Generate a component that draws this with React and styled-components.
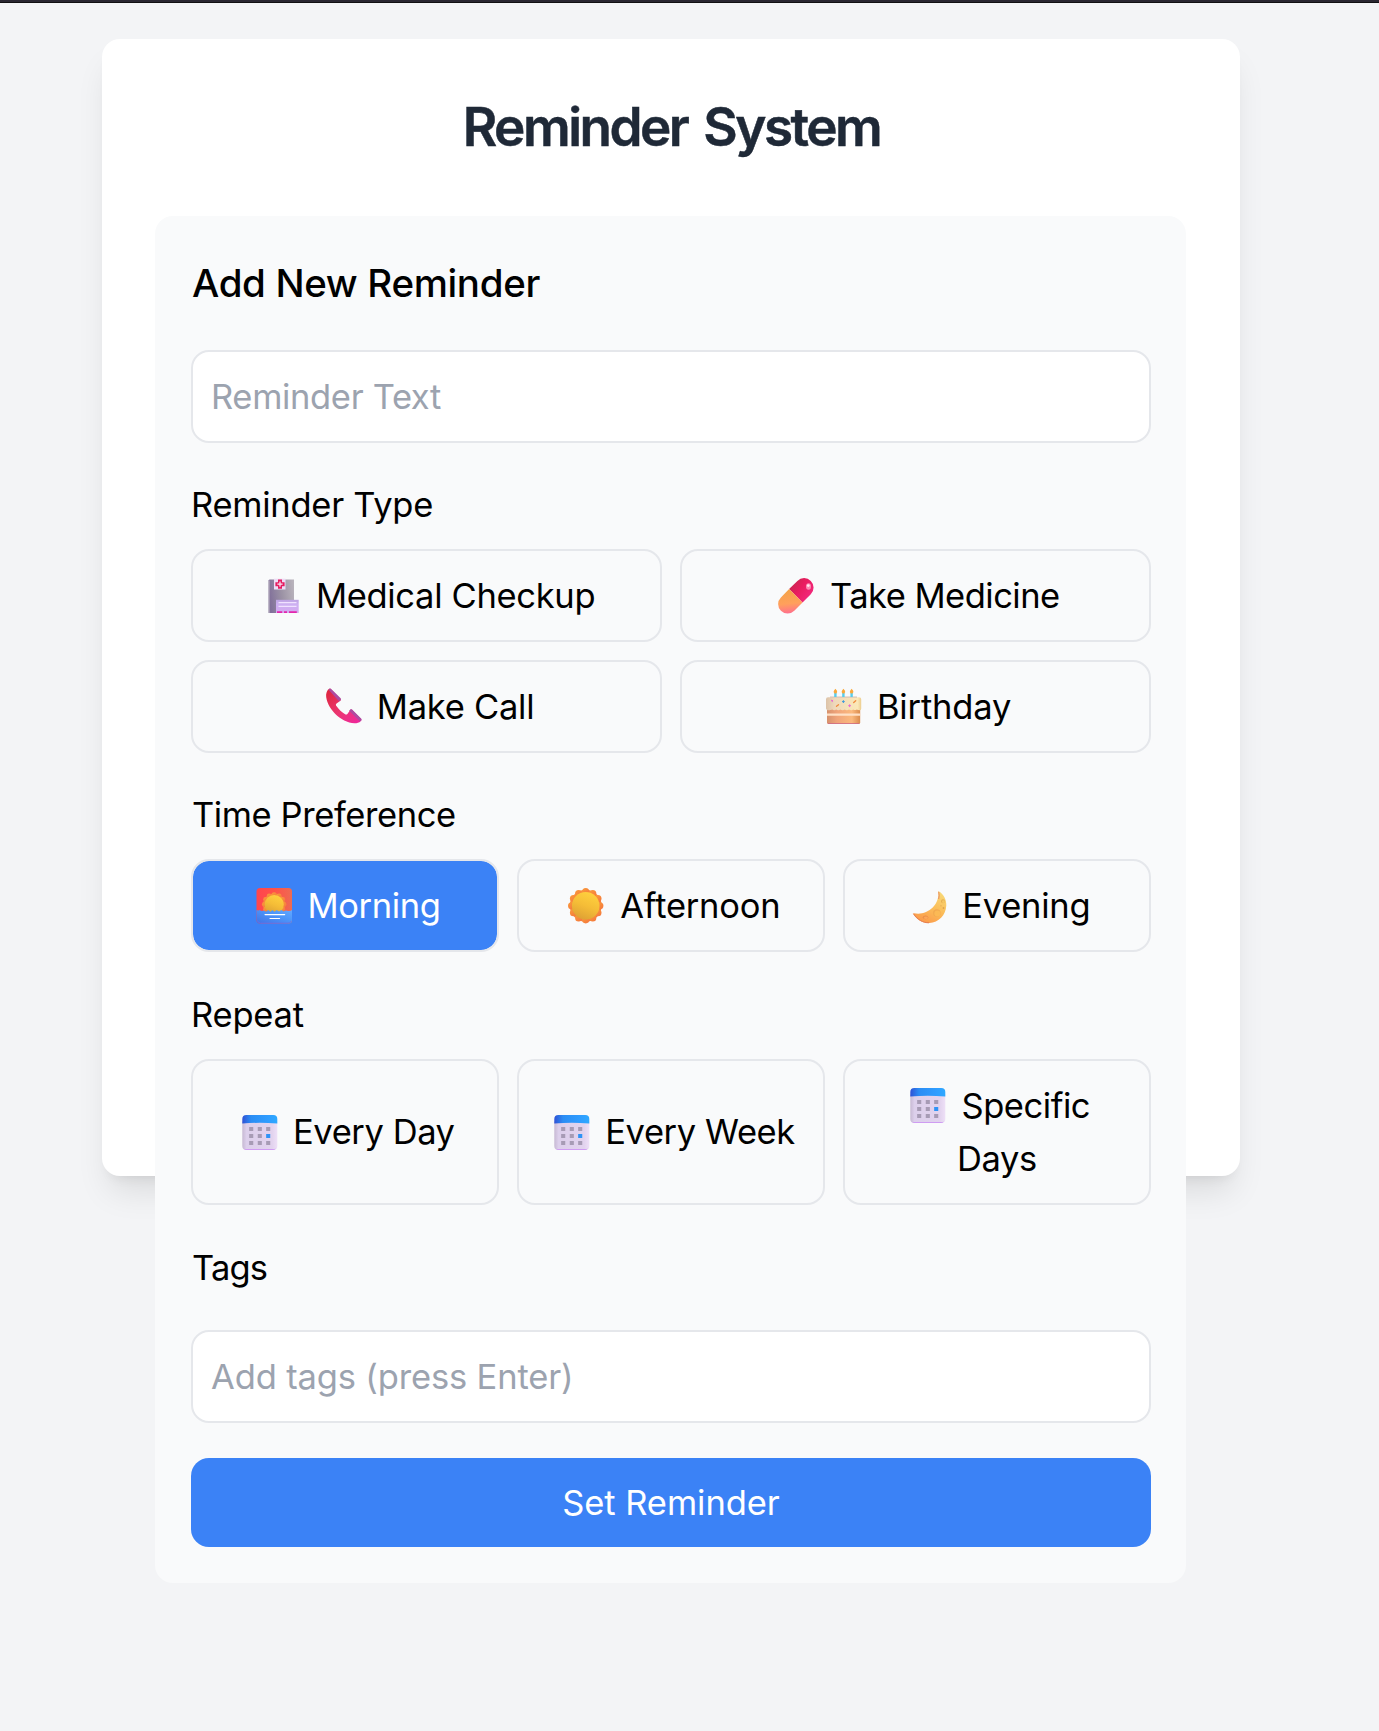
import React, { useState } from 'react';
import styled, { createGlobalStyle } from 'styled-components';

const GlobalStyle = createGlobalStyle`
  *, *::before, *::after { box-sizing: border-box; }
  body {
    margin: 0;
    background: #f3f4f6;
    color: #000;
    font-family: Inter, "Open Sans", sans-serif;
    font-size: 34.5px;
    line-height: 53.3px;
  }
`;

const Page = styled.main`
  height: 1731px;
  overflow: hidden;
  background: #f3f4f6;
  border-top: 2px solid #2a2731;
`;

const TopRule = styled.div`
  height: 1px;
  background: #111013;
`;

const Card = styled.section`
  width: 1138px;
  height: 1137px;
  margin: 36px 0 0 102px;
  padding: 53px 54px 0 53px;
  background: #fff;
  border-radius: 18px;
  box-shadow: 0 22px 33px -7px rgba(0, 0, 0, 0.1), 0 9px 13px -9px rgba(0, 0, 0, 0.1);
`;

const Title = styled.h1`
  margin: 0 0 53px;
  padding-left: 2px;
  color: #1f2937;
  font-size: 53px;
  font-weight: 600;
  line-height: 71px;
  letter-spacing: -2.5px;
  word-spacing: 5px;
  text-align: center;
  -webkit-text-stroke: 0.5px #1f2937;
`;

const Panel = styled.form`
  height: 1367px;
  padding: 36px 35px 0 36px;
  background: #f9fafb;
  border-radius: 18px;
`;

const Heading = styled.h2`
  margin: 0 0 36px;
  padding-left: 1px;
  font-size: 38.5px;
  font-weight: 500;
  line-height: 62px;
  letter-spacing: -0.35px;
`;

const Label = styled.h3`
  margin: 0 0 0 ${(p) => p.$indent ?? 0}px;
  padding: ${(p) => p.$above ?? 35}px 0 ${(p) => p.$below ?? 18}px;
  font-size: inherit;
  font-weight: 400;
  line-height: 53px;
  letter-spacing: ${(p) => p.$spacing}px;
`;

const Input = styled.input`
  display: block;
  width: 100%;
  height: 93px;
  padding: 0 18px;
  border: 2px solid #e5e7eb;
  border-radius: 18px;
  outline: 0;
  background: #fff;
  font: inherit;
  letter-spacing: ${(p) => p.$spacing}px;
  &::placeholder { color: #9ca3af; opacity: 1; }
`;

const Options = styled.div`
  display: grid;
  grid-template-columns: repeat(${(p) => p.$columns}, 1fr);
  gap: 18px;
`;

const Option = styled.button`
  display: flex;
  flex-direction: column;
  align-items: center;
  justify-content: center;
  min-height: ${(p) => p.$height}px;
  padding: 0;
  border: 2px solid #e5e7eb;
  border-radius: 18px;
  background: ${(p) => (p.$active ? '#3b82f6' : 'transparent')};
  background-clip: padding-box;
  color: ${(p) => (p.$active ? '#fff' : '#000')};
  font: inherit;
  white-space: nowrap;
`;

const OptionLine = styled.span`
  display: flex;
  align-items: center;
  gap: ${(p) => p.$gap}px;
  height: 53.3px;
  padding-left: ${(p) => p.$inset}px;
  letter-spacing: ${(p) => p.$spacing}px;
`;

const Glyph = styled.svg`
  display: block;
  flex: none;
  width: 36px;
  height: 36px;
  margin-top: 2px;
  overflow: visible;
`;

const Submit = styled.button`
  display: block;
  width: 100%;
  height: 89px;
  margin-top: 35px;
  padding: 0;
  border: 0;
  border-radius: 18px;
  background: #3b82f6;
  color: #fff;
  font: inherit;
  letter-spacing: -0.06px;
`;

function Hospital() {
  return (
    <Glyph viewBox="-1 0 36 36">
      <defs>
        <linearGradient id="hosp" x1="0" y1="0.4" x2="1" y2="0.2">
          <stop offset="0" stopColor="#81709a" />
          <stop offset="0.5" stopColor="#9c93a5" />
          <stop offset="1" stopColor="#b9b3bc" />
        </linearGradient>
        <linearGradient id="annex" x1="0" y1="0" x2="0" y2="1">
          <stop offset="0" stopColor="#bda4e2" />
          <stop offset="0.35" stopColor="#cdb0f2" />
          <stop offset="1" stopColor="#d3a9f0" />
        </linearGradient>
      </defs>
      <path d="M4.5 1.5H29V35H3.5V2.5z" fill="url(#hosp)" />
      <path d="M3.5 2.5h1V35h-1z" fill="#bfb9c5" />
      <path d="M9 .7h11.5v10.8H9z" fill="#eddcf6" />
      <path d="M13 1.600h4v2.600h2.600v4H17v2.600h-4V8.200h-2.600v-4H13z" fill="#e51c60" />
      <path d="M15 3.6v5.2M12.4 6.2h5.2" stroke="#f8e8f7" strokeWidth="1.2" />
      <path d="M11 21.8h22.7V35H11z" fill="url(#annex)" />
      <path d="M13.5 24.7h18M13.5 28.4h18" stroke="#f0e2ff" strokeWidth="1.2" />
      <path d="M12 33.200h5.2V35H12zM19 33.200h3V35h-3zM24 33.200h7.8V35H24z" fill="#e326ad" />
    </Glyph>
  );
}

function Pill() {
  return (
    <Glyph viewBox="0 0 36 36">
      <defs>
        <linearGradient id="pillTop" x1="0" y1="0" x2="1" y2="0.7">
          <stop offset="0" stopColor="#b92b4c" />
          <stop offset="0.5" stopColor="#e91c5f" />
          <stop offset="1" stopColor="#f32a80" />
        </linearGradient>
        <linearGradient id="pillLow" x1="0.3" y1="0" x2="0.4" y2="1">
          <stop offset="0" stopColor="#f3a447" />
          <stop offset="0.6" stopColor="#ffa05c" />
          <stop offset="1" stopColor="#ff6f8e" />
        </linearGradient>
      </defs>
      <path d="M11.1 11.1L19.4 2.9a9.45 9.45 0 0 1 13.4 13.4L24.5 24.6z" fill="url(#pillTop)" />
      <path d="M11.1 11.1L2.9 19.4a9.45 9.45 0 0 0 13.4 13.4L24.5 24.6z" fill="url(#pillLow)" />
      <ellipse cx="30.5" cy="8.5" rx="2.5" ry="3.2" fill="#ff9cbe" opacity=".85" />
      <circle cx="30.3" cy="7.6" r="1.4" fill="#fff" opacity=".8" />
    </Glyph>
  );
}

function Phone() {
  return (
    <Glyph viewBox="-0.5 1.5 36 36">
      <defs>
        <linearGradient id="phone" x1="0.1" y1="0.1" x2="0.9" y2="1">
          <stop offset="0" stopColor="#df2743" />
          <stop offset="0.5" stopColor="#eb3670" />
          <stop offset="1" stopColor="#ef279c" />
        </linearGradient>
      </defs>
      <path d="M1 5.2C1.6 3.2 3 1.2 4.6 1.1L15 11.4c.6.8.2 1.6-.5 2.1l-3.4 2.4c-.9.7-.9 1.7-.2 2.7 2.7 3.6 5.2 6 8.7 8.2.9.5 1.8.3 2.5-.6l2.4-3.4c.6-.8 1.4-.9 2.1-.3l9 9c.7.8.3 1.5-.4 2.2-1.5 1.5-3.7 2-6.2 2C15.500 35.600.300 20 .6 7.300z" fill="url(#phone)" />
      <path d="M4 1.100c.900-.200 1.500.1 2.200.8l8.700 8.700c.7.7.7 1.400.1 2.100l-1.500 1.100L3.300 2.400zM24.700 22c.6-.5 1.200-.5 1.900.1l9 9c.6.6.5 1.200.1 1.900l-1.400.8-10.600-10.600z" fill="#ad4aa0" />
    </Glyph>
  );
}

function Cake() {
  return (
    <Glyph viewBox="0 0.5 36 36">
      <defs>
        <linearGradient id="cake">
          <stop offset="0" stopColor="#d6916d" />
          <stop offset="0.3" stopColor="#f0a47a" />
          <stop offset="0.75" stopColor="#fbb97d" />
          <stop offset="1" stopColor="#d98b4d" />
        </linearGradient>
        <linearGradient id="cream">
          <stop offset="0" stopColor="#dcc3a9" />
          <stop offset="0.25" stopColor="#efd9bb" />
          <stop offset="0.9" stopColor="#fbe8b8" />
          <stop offset="1" stopColor="#eccd8f" />
        </linearGradient>
      </defs>
      <path d="M1 19h33.200v15.200q0 1.200-1.500 1.200H2.500Q1 35.400 1 34.200z" fill="url(#cake)" />
      <path d="M1 25.100h33.200v2.200H1z" fill="#ffe0c5" />
      <path d="M2 34.700h31.200v.8H2z" fill="#cf6a86" />
      <path d="M2 8.800h31q2.200 0 2.200 2v9.400q0 1.500-1.600 1.500t-2.800-.8q-1.600 1.300-3.600.2-2 1.400-4.200 0-2 1.400-4.300 0-2.200 1.400-4.300 0-2 1.400-4.200 0-2 1.200-3.900 0-2.200 1-4.600.6-1.700-.3-1.700-1.600v-9.300q0-2 2-2z" fill="url(#cream)" />
      <path d="M4 8h27v1.200H4z" fill="#d8c3b0" />
      <path d="M8.200 4.600h2.400v4H8.200zM16.200 4.600h2.400v4h-2.400zM24.400 4.600h2.400v4h-2.400z" fill="#58cde9" />
      <path d="M9.400.3q2 2 1.800 3.200-.4 1.500-1.800 1.500t-1.800-1.500Q7.600 2.300 9.400.3zM17.400.3q2 2 1.800 3.200-.4 1.500-1.800 1.500t-1.800-1.500q.1-1.200 1.800-3.200zM25.600.3q2 2 1.800 3.200-.4 1.500-1.800 1.500t-1.800-1.500q.1-1.200 1.800-3.200z" fill="#f9a93c" />
      <path d="M5 11.600l2 .8M6.200 13.600v-2M22.200 17.200h2.800M23.600 15.800v2.800" stroke="#e86bd0" strokeWidth="1" />
      <path d="M16 13.100h2.800M17.400 11.700v2.800" stroke="#3c9bdb" strokeWidth="1" />
      <path d="M10.500 17.800l2-1.600M27.700 14l2-1.800" stroke="#f08b3c" strokeWidth="1.300" strokeLinecap="round" />
    </Glyph>
  );
}

const petals = Array.from({ length: 12 }, (_, i) => {
  const a = (i * Math.PI) / 6;
  return [Math.sin(a), Math.cos(a)];
});

function SunDisc({ cx, cy, r, id }) {
  return (
    <g>
      <defs>
        <linearGradient id={id} x1="0.7" y1="0" x2="0.3" y2="1">
          <stop offset="0" stopColor="#ffd13e" />
          <stop offset="0.5" stopColor="#f5bd37" />
          <stop offset="1" stopColor="#dda034" />
        </linearGradient>
        <linearGradient id={`${id}Edge`} x1="0" y1="0" x2="0.8" y2="1">
          <stop offset="0" stopColor="#fa9c3b" />
          <stop offset="1" stopColor="#f5793d" />
        </linearGradient>
      </defs>
      <g fill={`url(#${id}Edge)`}>
        <circle cx={cx} cy={cy} r={r * 0.9} />
        {petals.map(([s, c], i) => (
          <circle key={i} cx={cx + s * r * 0.8} cy={cy + c * r * 0.8} r={r * 0.2} />
        ))}
      </g>
      <circle cx={cx} cy={cy} r={r * 0.78} fill={`url(#${id})`} />
    </g>
  );
}

function Sunrise() {
  return (
    <Glyph viewBox="-0.5 0 36 36">
      <defs>
        <linearGradient id="sky">
          <stop offset="0" stopColor="#ff454e" />
          <stop offset="0.5" stopColor="#ff5148" />
          <stop offset="1" stopColor="#ee6b52" />
        </linearGradient>
        <linearGradient id="sea" x1="0" y1="1" x2="1" y2="0">
          <stop offset="0" stopColor="#3f72e5" />
          <stop offset="0.6" stopColor="#4d96fa" />
          <stop offset="1" stopColor="#63a9ff" />
        </linearGradient>
      </defs>
      <rect width="35.500" height="35.500" rx="3.500" fill="url(#sky)" />
      <SunDisc cx={17.700} cy={16.500} r={12.300} id="sunLow" />
      <path d="M0 22q1.600.9 3.200 0 2 1.500 4.200.5l2 1.200 2.400-1.700 2 1.800 2.200-1.900 2 1.800 2.200-1.700 2.300 1.500 2.400-1.500 2.300 1.400q2.200-1.600 4.300-.5 2 .6 4-.9v10q0 3.500-3.500 3.500H3.500Q0 35.500 0 32z" fill="url(#sea)" />
      <path d="M8.500 26.600h19.700M13.500 30.500h9.600" stroke="#fff" strokeWidth="1.100" strokeLinecap="round" />
      <path d="M1 32.500q.5 2.400 3 2.600h27q2.600 0 3.600-2" fill="none" stroke="#6a70e8" strokeWidth=".8" />
    </Glyph>
  );
}

function Sun() {
  return (
    <Glyph viewBox="0 0 36 36">
      <SunDisc cx={17.700} cy={17.700} r={17.700} id="sunHigh" />
    </Glyph>
  );
}

function Moon() {
  return (
    <Glyph viewBox="-1 0 36 36">
      <defs>
        <linearGradient id="moon" x1="0.8" y1="0" x2="0.3" y2="1">
          <stop offset="0" stopColor="#f8d978" />
          <stop offset="0.5" stopColor="#fbbd59" />
          <stop offset="1" stopColor="#fb9a4b" />
        </linearGradient>
      </defs>
      <path d="M28 3.400c4.500 2.600 7.600 8 7.300 14.200-.4 9.700-7.700 17.200-16.900 17.400-6.500.2-12.200-2.500-16.100-9-.3-.6.1-1 .8-.8 6.200 1.600 13.900-.8 18.600-5.600 4.500-4.600 6.200-10.200 5.500-15.500-.1-.7.200-1 .8-.7z" fill="url(#moon)" />
      <path d="M2.500 25.800c4 6 9.500 9 15.500 9" fill="none" stroke="#e57c53" strokeWidth="1" />
      <path d="M27.700 3.800q.9 3.600 0 7.200" fill="none" stroke="#e98b63" strokeWidth="1" />
      <circle cx="25.800" cy="25" r="3.800" fill="#f2aa50" />
      <circle cx="26.400" cy="25.400" r="3" fill="#fbb955" />
      <ellipse cx="14.500" cy="29.300" rx="2.700" ry="1.900" fill="#ea8e49" />
      <ellipse cx="14.900" cy="29.800" rx="2" ry="1.200" fill="#fca858" />
      <circle cx="32" cy="13.300" r="2" fill="#e5ad51" />
      <circle cx="32.400" cy="13.700" r="1.400" fill="#f7c964" />
      <circle cx="32.500" cy="20" r=".9" fill="#dda24e" />
      <circle cx="30" cy="17.800" r=".6" fill="#dda24e" />
    </Glyph>
  );
}

function Calendar() {
  return (
    <Glyph viewBox="0 0.5 36 36">
      <defs>
        <linearGradient id="calHead">
          <stop offset="0" stopColor="#3052d5" />
          <stop offset="0.25" stopColor="#2b8df4" />
          <stop offset="0.75" stopColor="#2f9dff" />
          <stop offset="1" stopColor="#2fa9ff" />
        </linearGradient>
        <linearGradient id="calBody">
          <stop offset="0" stopColor="#c7b9d3" />
          <stop offset="0.12" stopColor="#dccfeb" />
          <stop offset="0.85" stopColor="#e2d3ee" />
          <stop offset="1" stopColor="#eee0f7" />
        </linearGradient>
      </defs>
      <path d="M.3 7h35v24.500q0 4-4 4h-27q-4 0-4-4z" fill="url(#calBody)" />
      <path d="M1.800 34q1 1.500 3 1.500h26q2 0 3-1.500-1.200.6-3 .6h-26q-2 0-3-.6z" fill="#cf9cf2" />
      <path d="M.3 9V4.500q0-4 4-4h27q4 0 4 4V9q-9-.7-17.500-.7T.3 9z" fill="url(#calHead)" />
      {[14.500, 21.500, 28.500].map((y, row) =>
        [9.200, 17.800, 26.200].map((x, col) => (
          <rect
            key={`${row}-${col}`}
            x={x - 2.050}
            y={y - 2}
            width="4.100"
            height="4"
            fill={row === 1 && col === 2 ? '#2e93f6' : '#a79bb5'}
          />
        ))
      )}
    </Glyph>
  );
}

const types = [
  { text: 'Medical Checkup', icon: Hospital, spacing: -0.32, gap: 15.5 },
  { text: 'Take Medicine', icon: Pill, spacing: -0.525, gap: 16 },
  { text: 'Make Call', icon: Phone, spacing: -0.25, gap: 15.5 },
  { text: 'Birthday', icon: Cake, spacing: -0.16 },
];

const times = [
  { text: 'Morning', icon: Sunrise, spacing: -0.35, gap: 15.5 },
  { text: 'Afternoon', icon: Sun, spacing: -0.22, gap: 16 },
  { text: 'Evening', icon: Moon, spacing: -0.25, gap: 16 },
];

const repeats = [
  { text: 'Every Day', icon: Calendar, spacing: -0.42, gap: 15 },
  { text: 'Every Week', icon: Calendar, spacing: -0.4, gap: 15.5 },
  { text: 'Specific', second: 'Days', icon: Calendar, spacing: -0.45, gap: 15 },
];

function OptionGroup({ items, columns, height = 93, value, onChange }) {
  return (
    <Options $columns={columns}>
      {items.map(({ text, second, icon: Icon, spacing, gap = 14.5 }) => (
        <Option
          key={text}
          type="button"
          $height={height}
          $active={value === text}
          onClick={() => onChange(text)}
        >
          <OptionLine $gap={gap} $inset={6.6} $spacing={spacing}>
            <Icon />
            {text}
          </OptionLine>
          {second && (
            <OptionLine $gap={0} $inset={0} $spacing={-0.4}>
              {second}
            </OptionLine>
          )}
        </Option>
      ))}
    </Options>
  );
}

export default function App() {
  const [type, setType] = useState(null);
  const [time, setTime] = useState('Morning');
  const [repeat, setRepeat] = useState(null);

  return (
    <>
      <GlobalStyle />
      <Page>
        <TopRule />
        <Card>
          <Title>Reminder System</Title>
          <Panel onSubmit={(e) => e.preventDefault()}>
            <Heading>Add New Reminder</Heading>
            <Input placeholder="Reminder Text" $spacing={-0.34} />

            <Label $spacing={-0.26}>Reminder Type</Label>
            <OptionGroup items={types} columns={2} value={type} onChange={setType} />

            <Label $spacing={-0.41} $indent={1}>Time Preference</Label>
            <OptionGroup items={times} columns={3} value={time} onChange={setTime} />

            <Label $spacing={-0.2} $above={36}>Repeat</Label>
            <OptionGroup items={repeats} columns={3} height={146} value={repeat} onChange={setRepeat} />

            <Label $spacing={-0.85} $indent={1} $above={36} $below={36}>Tags</Label>
            <Input placeholder="Add tags (press Enter)" $spacing={-0.15} />
            <Submit type="submit">Set Reminder</Submit>
          </Panel>
        </Card>
      </Page>
    </>
  );
}
